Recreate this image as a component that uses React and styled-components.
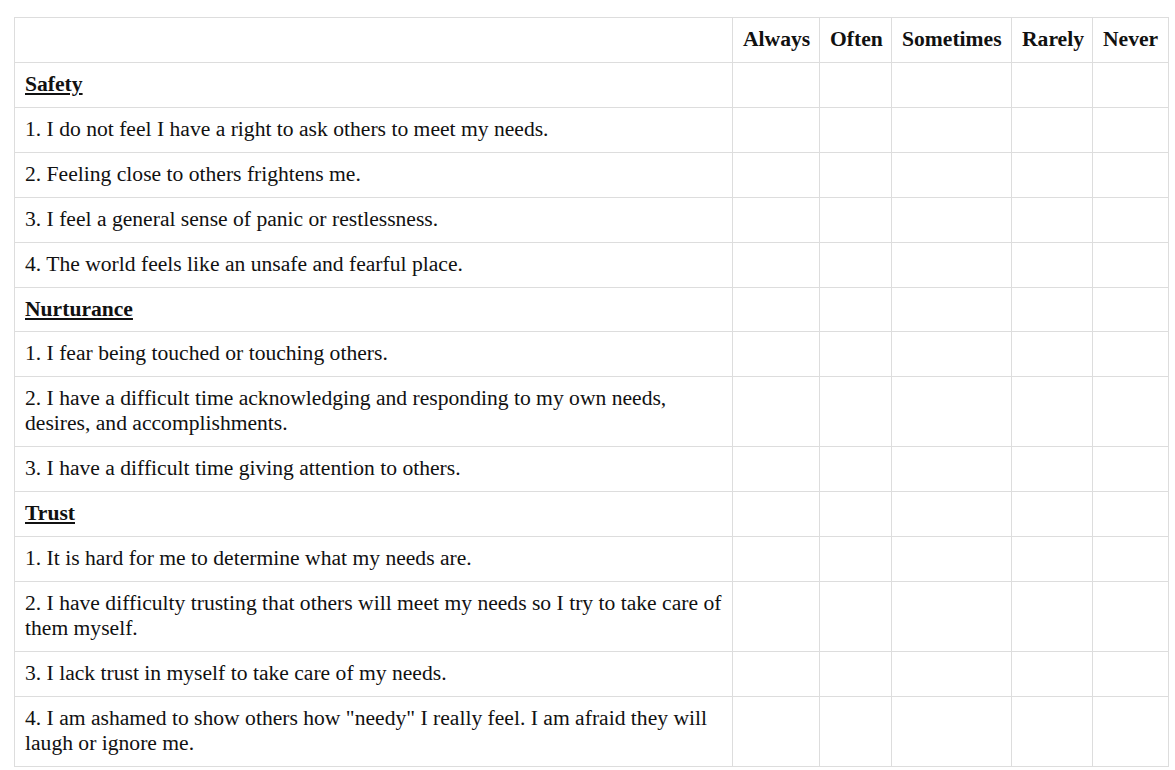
import React from 'react'
import styled, { createGlobalStyle } from 'styled-components'

const GlobalStyle = createGlobalStyle`
  body {
    margin: 0;
    background: #fff;
    font-family: "Liberation Serif", "Times New Roman", serif;
    color: #111;
  }
`;

const Page = styled.div`
  padding: 17px 0 0 14px;
`;

const Table = styled.table`
  border-collapse: collapse;
  table-layout: fixed;
  width: 1154px;
  font-size: 21.6px;
  line-height: 25px;
`;

const Th = styled.th`
  box-sizing: border-box;
  border: 1px solid #ddd;
  padding: 9px 10px 9.93px;
  font-weight: bold;
  text-align: left;
  white-space: nowrap;
  width: ${p => p.w}px;
`;

const Td = styled.td`
  border: 1px solid #ddd;
  padding: 9px 10px 9.93px;
  vertical-align: top;
`;

const Section = styled.span`
  font-weight: bold;
  text-decoration: underline;
`;

const scale = [
  { label: 'Always', w: 87 },
  { label: 'Often', w: 72 },
  { label: 'Sometimes', w: 120 },
  { label: 'Rarely', w: 81 },
  { label: 'Never', w: 76 },
];

const sections = [
  {
    title: 'Safety',
    items: [
      '1. I do not feel I have a right to ask others to meet my needs.',
      '2. Feeling close to others frightens me.',
      '3. I feel a general sense of panic or restlessness.',
      '4. The world feels like an unsafe and fearful place.',
    ],
  },
  {
    title: 'Nurturance',
    items: [
      '1. I fear being touched or touching others.',
      '2. I have a difficult time acknowledging and responding to my own needs, desires, and accomplishments.',
      '3. I have a difficult time giving attention to others.',
    ],
  },
  {
    title: 'Trust',
    items: [
      '1. It is hard for me to determine what my needs are.',
      '2. I have difficulty trusting that others will meet my needs so I try to take care of them myself.',
      '3. I lack trust in myself to take care of my needs.',
      '4. I am ashamed to show others how "needy" I really feel. I am afraid they will laugh or ignore me.',
    ],
  },
];

const Row = ({ children }) => (
  <tr>
    <Td>{children}</Td>
    {scale.map(s => <Td key={s.label} />)}
  </tr>
);

const App = () => {
  return (
    <Page>
      <GlobalStyle />
      <Table>
        <thead>
          <tr>
            <Th w={718} />
            {scale.map(s => <Th key={s.label} w={s.w}>{s.label}</Th>)}
          </tr>
        </thead>
        <tbody>
          {sections.map(sec => (
            <React.Fragment key={sec.title}>
              <Row><Section>{sec.title}</Section></Row>
              {sec.items.map(item => <Row key={item}>{item}</Row>)}
            </React.Fragment>
          ))}
        </tbody>
      </Table>
    </Page>
  )
}

export default App
